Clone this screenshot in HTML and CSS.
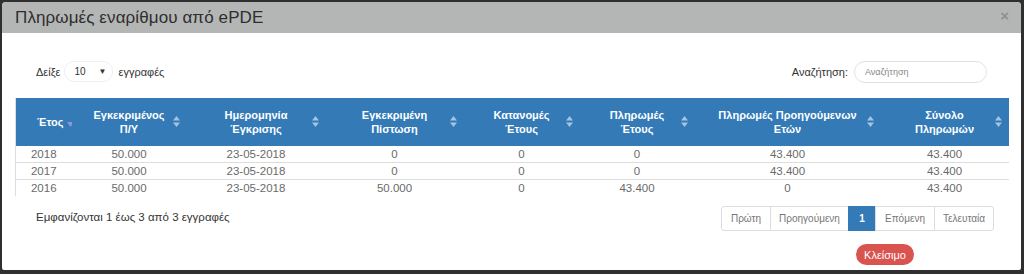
FILE: index.html
```html
<!DOCTYPE html>
<html lang="el">
<head>
<meta charset="utf-8">
<link rel="stylesheet" href="styles.css">
</head>
<body>
<div class="modal">
  <div class="modal-header">
    <h4 class="modal-title">Πληρωμές εναρίθμου από ePDE</h4>
    <span class="close">×</span>
  </div>
  <div class="modal-body">
    <div class="controls">
      <div class="length">
        <span>Δείξε</span>
        <div class="select"><span>10</span><span class="caret">▼</span></div>
        <span>εγγραφές</span>
      </div>
      <div class="filter">
        <span>Αναζήτηση:</span>
        <input class="search" type="text" placeholder="Αναζήτηση">
      </div>
    </div>
    <table class="grid">
      <colgroup>
        <col style="width:56px"><col style="width:115px"><col style="width:139px"><col style="width:138px">
        <col style="width:116px"><col style="width:115px"><col style="width:186px"><col style="width:128px">
      </colgroup>
      <thead>
        <tr>
          <th class="first"><span class="t1">Έτος</span><svg class="desc" width="7" height="5" viewBox="0 0 7 5"><path d="M0 0h7L3.5 5z"/></svg></th>
          <th>Εγκεκριμένος<br>Π/Υ<svg class="sort" width="7" height="11" viewBox="0 0 7 11"><path d="M3.5 0L7 4.5H0z M0 6.5h7L3.5 11z"/></svg></th>
          <th>Ημερομηνία<br>Έγκρισης<svg class="sort" width="7" height="11" viewBox="0 0 7 11"><path d="M3.5 0L7 4.5H0z M0 6.5h7L3.5 11z"/></svg></th>
          <th>Εγκεκριμένη<br>Πίστωση<svg class="sort" width="7" height="11" viewBox="0 0 7 11"><path d="M3.5 0L7 4.5H0z M0 6.5h7L3.5 11z"/></svg></th>
          <th>Κατανομές<br>Έτους<svg class="sort" width="7" height="11" viewBox="0 0 7 11"><path d="M3.5 0L7 4.5H0z M0 6.5h7L3.5 11z"/></svg></th>
          <th>Πληρωμές<br>Έτους<svg class="sort" width="7" height="11" viewBox="0 0 7 11"><path d="M3.5 0L7 4.5H0z M0 6.5h7L3.5 11z"/></svg></th>
          <th>Πληρωμές Προηγούμενων<br>Ετών<svg class="sort" width="7" height="11" viewBox="0 0 7 11"><path d="M3.5 0L7 4.5H0z M0 6.5h7L3.5 11z"/></svg></th>
          <th>Σύνολο<br>Πληρωμών<svg class="sort" width="7" height="11" viewBox="0 0 7 11"><path d="M3.5 0L7 4.5H0z M0 6.5h7L3.5 11z"/></svg></th>
        </tr>
      </thead>
      <tbody>
        <tr><td>2018</td><td>50.000</td><td>23-05-2018</td><td>0</td><td>0</td><td>0</td><td>43.400</td><td>43.400</td></tr>
        <tr><td>2017</td><td>50.000</td><td>23-05-2018</td><td>0</td><td>0</td><td>0</td><td>43.400</td><td>43.400</td></tr>
        <tr><td>2016</td><td>50.000</td><td>23-05-2018</td><td>50.000</td><td>0</td><td>43.400</td><td>0</td><td>43.400</td></tr>
      </tbody>
    </table>
    <div class="footer-row">
      <div class="info">Εμφανίζονται 1 έως 3 από 3 εγγραφές</div>
      <ul class="pagination">
        <li class="p-first">Πρώτη</li>
        <li class="p-prev">Προηγούμενη</li>
        <li class="active">1</li>
        <li class="p-next">Επόμενη</li>
        <li class="p-last">Τελευταία</li>
      </ul>
    </div>
    <div class="actions">
      <button class="btn-close">Κλείσιμο</button>
    </div>
  </div>
</div>
</body>
</html>
```

FILE: styles.css
```css
html, body {
  margin: 0;
  padding: 0;
  background: #2f2f2f;
  font-family: "Liberation Sans", Arial, sans-serif;
}
body {
  width: 1024px;
  height: 274px;
  overflow: hidden;
}
.modal {
  margin: 2px 3px 0 2px;
  height: 268px;
  background: #fff;
  border-radius: 4px 4px 2px 2px;
  overflow: hidden;
}
.modal-header {
  height: 31px;
  background: #b4b5b5;
  display: flex;
  align-items: center;
  justify-content: space-between;
  padding: 0 12px 0 13px;
}
.modal-title {
  margin: 0;
  font-weight: normal;
  font-size: 17px;
  color: #2e2e2e;
  letter-spacing: 0.1px;
}
.close {
  font-size: 15px;
  color: #8f9090;
  font-weight: bold;
  line-height: 1;
  margin-top: -4px;
}
.modal-body {
  padding: 28px 13px 0 13px;
}
.controls {
  display: flex;
  justify-content: space-between;
  align-items: center;
  padding: 0 21px;
  height: 21px;
  font-size: 11px;
  color: #333;
}
.length, .filter {
  display: flex;
  align-items: center;
}
.select {
  margin: 0 6px 0 3px;
  width: 49px;
  height: 21px;
  box-sizing: border-box;
  border: 1px solid #f0f0f0;
  border-radius: 10px;
  display: flex;
  align-items: center;
  justify-content: space-between;
  padding: 0 5px 0 10px;
  font-size: 10px;
}
.caret {
  font-size: 8px;
}
.filter span {
  margin-right: 6px;
}
.search {
  width: 133px;
  height: 22px;
  box-sizing: border-box;
  border: 1px solid #e2e2e2;
  border-radius: 11px;
  padding: 0 0 0 10px;
  font-family: "Liberation Sans", Arial, sans-serif;
  font-size: 9px;
  outline: none;
}
.search::placeholder {
  color: #888;
}
.grid {
  margin-top: 16px;
  width: 993px;
  border-collapse: collapse;
  table-layout: fixed;
  border-left: 1px solid #ddd;
}
.grid th {
  background: #337ab7;
  color: #fff;
  font-size: 11px;
  font-weight: bold;
  line-height: 14px;
  height: 48px;
  padding: 0 8px;
  text-align: center;
  position: relative;
}
.grid th .sort {
  position: absolute;
  right: 7px;
  top: 18px;
  fill: rgba(255, 255, 255, 0.55);
}
.grid th.first {
  text-align: left;
  padding: 0 0 0 21px;
  white-space: nowrap;
}
.grid th .desc {
  margin-left: 4px;
  vertical-align: -1px;
  fill: #8e97d6;
}
.grid td {
  height: 16px;
  padding: 0;
  font-size: 11.5px;
  color: #6a6a6a;
  text-align: center;
  border-top: 1px solid #ddd;
  line-height: 16px;
}
.grid tbody tr:first-child td {
  border-top: none;
}
.footer-row {
  display: flex;
  justify-content: space-between;
  align-items: flex-start;
  margin-top: 10px;
  padding: 0 14px 0 21px;
}
.info {
  font-size: 11.5px;
  color: #333;
  padding-top: 5px;
}
.pagination {
  list-style: none;
  margin: 0;
  padding: 0;
  display: flex;
}
.pagination li {
  height: 25px;
  box-sizing: border-box;
  border: 1px solid #ddd;
  margin-left: -1px;
  padding: 0;
  font-size: 10px;
  color: #777;
  display: flex;
  align-items: center;
  justify-content: center;
}
.pagination .p-first {
  margin-left: 0;
  border-radius: 3px 0 0 3px;
  width: 50px;
}
.pagination .p-prev { width: 79px; }
.pagination .p-next { width: 60px; }
.pagination .p-last {
  width: 60px;
  border-radius: 0 3px 3px 0;
}
.pagination li.active {
  background: #337ab7;
  border-color: #337ab7;
  color: #fff;
  font-weight: bold;
  width: 28px;
}
.actions {
  display: flex;
  justify-content: flex-end;
  margin-top: 13px;
  padding-right: 94px;
}
.btn-close {
  background: #d9534f;
  color: #fff;
  border: none;
  border-radius: 11px;
  height: 21px;
  width: 58px;
  font-family: "Liberation Sans", Arial, sans-serif;
  font-size: 11px;
  padding: 0;
}
```
